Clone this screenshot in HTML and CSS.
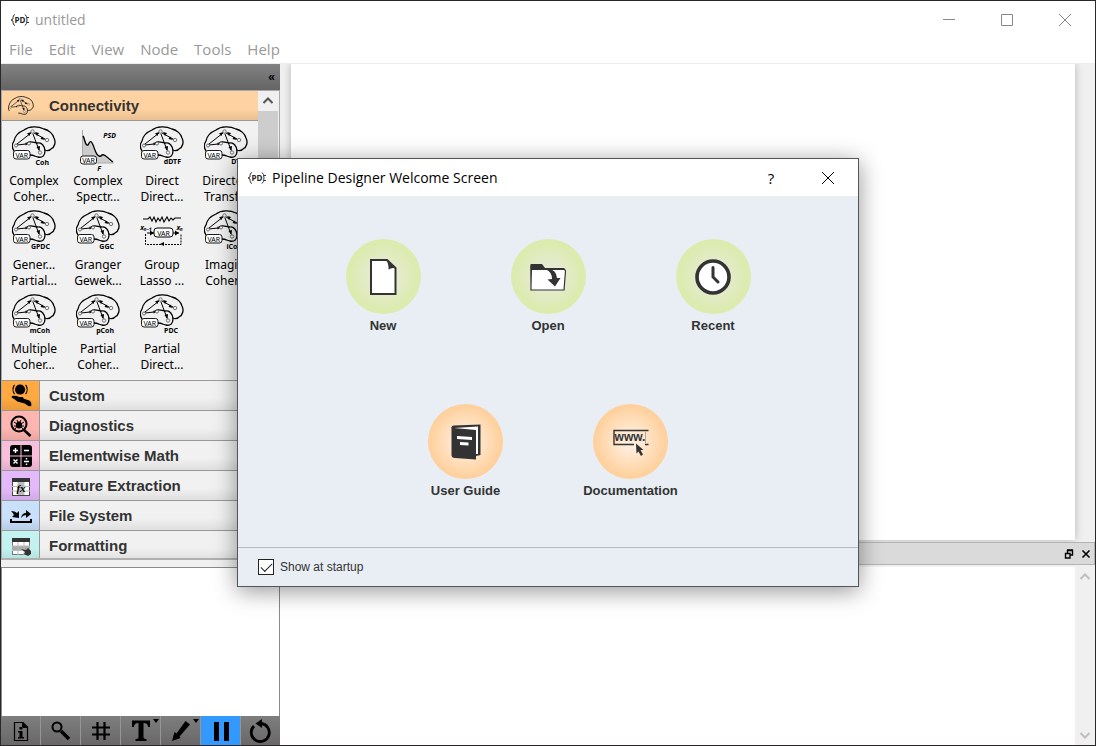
FILE: index.html
```html
<!DOCTYPE html>
<html lang="en">
<head>
<meta charset="utf-8">
<title>untitled</title>
<link rel="stylesheet" href="styles.css">
</head>
<body>
<svg class="defs" aria-hidden="true">
  <defs>
    <symbol id="logo" viewBox="0 0 20 14">
      <g fill="none" stroke="#333" stroke-width="1">
        <path d="M5 1.500Q3 2 3 4.500V6L1 7L3 8V9.500Q3 12 5 12.500M15 1.500Q17 3 17 7T15 12.500"/>
        <path d="M17 4.500H19M17 9.500H19" />
      </g>
      <text x="10" y="10" text-anchor="middle" class="logo-text">PD</text>
    </symbol>
    <symbol id="brain-lines" viewBox="0 0 44 34">
      <g fill="none" stroke="#000" stroke-width="1.300" stroke-linecap="round" stroke-linejoin="round">
        <path d="M2 25C0 22 0 18 2 15C3 10 7 6 12 4C17 0 26 0 32 3C37 4 41 8 42 12C44 16 43 21 39 23C37 25 35 25 33 24"/>
        <path d="M15 17C19 14 22 17 26 17C29 16 33 20 33 25C33 30 30 32 26 31C24 31 22 29 18 29"/>
        <path d="M5 18L19 7M5 19L14 18M22 7L33 13M21 8L27 24" stroke-width="1"/>
      </g>
      <path d="M19 6L15 7.500L17.500 10ZM13.500 16.500V19.500L16 18ZM23 6L27 7L25 10ZM30 10.500L28.500 13L33 14ZM24.500 21L28 20L27.500 25Z"/>
      <g fill="#f0f0f0" stroke="#555" stroke-width=".8">
        <circle cx="4" cy="19.500" r="1.500"/><circle cx="17" cy="17.500" r="1.500"/><circle cx="20.500" cy="5.500" r="1.700"/><circle cx="35" cy="14" r="1.700"/><circle cx="28" cy="26.500" r="1.700"/>
      </g>
    </symbol>
    <symbol id="brain" viewBox="0 0 44 34">
      <use href="#brain-lines" width="44" height="34"/>
      <rect x="1.500" y="24.500" width="16.500" height="8.500" rx="2.500" fill="#fff" stroke="#000" stroke-width=".9"/>
      <text x="9.750" y="31.500" text-anchor="middle" class="var-text">VAR</text>
    </symbol>
  </defs>
</svg>

<div class="window">
  <header class="titlebar">
    <svg class="logo" viewBox="0 0 20 14"><use href="#logo"/></svg>
    <span class="window-title">untitled</span>
    <div class="window-controls">
      <button aria-label="Minimize"><svg viewBox="0 0 14 14"><path d="M1 6.500H13"/></svg></button>
      <button aria-label="Maximize"><svg viewBox="0 0 14 14"><path d="M1.500 1.500H12.500V12.500H1.500Z"/></svg></button>
      <button aria-label="Close window"><svg viewBox="0 0 14 14"><path d="M1 1L13 13M13 1L1 13"/></svg></button>
    </div>
  </header>
  <nav class="menubar">
    <button>File</button><button>Edit</button><button>View</button><button>Node</button><button>Tools</button><button>Help</button>
  </nav>

  <div class="workspace">
    <aside class="sidebar">
      <div class="dock-bar"><button aria-label="Collapse">«</button></div>
      <div class="toolbox">
        <div class="groups">
          <button class="group open">
            <span class="group-icon"><svg class="wide" viewBox="0 0 44 34"><use href="#brain-lines"/></svg></span>Connectivity
          </button>
          <div class="nodes">
            <div class="node"><svg viewBox="0 0 44 42"><use href="#brain" width="44" height="34"/><text x="37" y="39" class="tag">Coh</text></svg><span>Complex<br>Coher...</span></div>
            <div class="node"><svg viewBox="0 0 44 42">
              <path d="M7 37V10L9 14L11 20L14 16L18 24L23 30L27 28L31 33L37 37Z" fill="#ccc"/>
              <path d="M6.500 4V37H38" fill="none" stroke="#aaa"/>
              <path d="M7 10C9 13 9 20 12 19C14 15 15 14 17 19C19 24 21 32 25 30C28 26 32 33 37 36" fill="none" stroke="#000" stroke-width="1.400"/>
              <rect x="4.500" y="30" width="16" height="8" rx="2.500" fill="#fff" stroke="#000" stroke-width=".9"/>
              <text x="12.500" y="37" text-anchor="middle" class="var-text">VAR</text>
              <text x="40" y="12" class="tag slant">PSD</text><text x="25" y="45" class="tag slant">F</text>
            </svg><span>Complex<br>Spectr...</span></div>
            <div class="node"><svg viewBox="0 0 44 42"><use href="#brain" width="44" height="34"/><text x="41" y="38" class="tag">dDTF</text></svg><span>Direct<br>Direct...</span></div>
            <div class="node"><svg viewBox="0 0 44 42"><use href="#brain" width="44" height="34"/><text x="40" y="38" class="tag">DTF</text></svg><span>Directed<br>Transf...</span></div>
            <div class="node"><svg viewBox="0 0 44 42"><use href="#brain" width="44" height="34"/><text x="38" y="39" class="tag">GPDC</text></svg><span>Gener...<br>Partial...</span></div>
            <div class="node"><svg viewBox="0 0 44 42"><use href="#brain" width="44" height="34"/><text x="38" y="39" class="tag">GGC</text></svg><span>Granger<br>Gewek...</span></div>
            <div class="node"><svg viewBox="0 0 44 42">
              <path d="M3 9H8L10 7L12 11L14 7L16 12L18 8L20 11L22 7L24 12L27 7L29 11L31 8L33 10L35 8H41" fill="none" stroke="#000" stroke-width="1.100"/>
              <rect x="14" y="18" width="19" height="9" rx="3" fill="#fff" stroke="#000"/>
              <text x="23.500" y="25.500" text-anchor="middle" class="var-text">VAR</text>
              <path d="M7 23H14M33 23H39" stroke="#000"/><path d="M10 20.500L14 23L10 25.500ZM35 20.500L39 23L35 25.500ZM24 32V36L20 34Z"/>
              <path d="M5.500 24V34.500H41V24" fill="none" stroke="#000" stroke-dasharray="2 1"/>
              <text x="12" y="20" class="tag slant">xₙ₋₁</text><text x="43" y="20" class="tag slant">xₙ</text>
            </svg><span>Group<br>Lasso ...</span></div>
            <div class="node"><svg viewBox="0 0 44 42"><use href="#brain" width="44" height="34"/><text x="38" y="39" class="tag">iCoh</text></svg><span>Imagi...<br>Coher...</span></div>
            <div class="node"><svg viewBox="0 0 44 42"><use href="#brain" width="44" height="34"/><text x="38" y="39" class="tag">mCoh</text></svg><span>Multiple<br>Coher...</span></div>
            <div class="node"><svg viewBox="0 0 44 42"><use href="#brain" width="44" height="34"/><text x="38" y="39" class="tag">pCoh</text></svg><span>Partial<br>Coher...</span></div>
            <div class="node"><svg viewBox="0 0 44 42"><use href="#brain" width="44" height="34"/><text x="38" y="39" class="tag">PDC</text></svg><span>Partial<br>Direct...</span></div>
          </div>
          <button class="group"><span class="group-icon orange"><svg viewBox="0 0 24 26"><circle cx="11" cy="6" r="5.500"/><path d="M5 1Q1.500 6 5 11M17 1Q20.500 6 17 11" fill="none" stroke="#000" stroke-width="1.200"/><path d="M2 13Q6 12 10 14H14L15 16L21 18Q24 20 23 24Q19 24 16 21L8 19Q5 16 2 15Z"/></svg></span>Custom</button>
          <button class="group"><span class="group-icon red"><svg viewBox="0 0 24 24"><circle cx="10" cy="10" r="7.500" fill="none" stroke="#000" stroke-width="2"/><path d="M15 16L21.500 22" stroke="#000" stroke-width="2.500"/><ellipse cx="10" cy="11" rx="3" ry="3.500"/><path d="M5 8L8 10M15 8L12 10M5 12H15M6 15L8 12.500M14 15L12 12.500M8 6L9 8M12 6L11 8" stroke="#000"/></svg></span>Diagnostics</button>
          <button class="group"><span class="group-icon pink"><svg viewBox="0 0 24 24"><rect x="1" y="1" width="22" height="22" rx="3"/><path d="M12 0V24M0 12H24" stroke="#f9bedb" stroke-width="1"/><path d="M6.500 4V9M4 6.500H9M15 6.500H20M4.500 15.500L8.500 19.500M8.500 15.500L4.500 19.500M15 17.500H20M17.500 14V15.500M17.500 19.500V21" stroke="#fff" stroke-width="1.400"/></svg></span>Elementwise Math</button>
          <button class="group"><span class="group-icon purple"><svg viewBox="0 0 24 24"><rect x="3.500" y="4.500" width="17" height="17" fill="#fff" stroke="#444"/><path d="M9 8H15V21H9Z" fill="#bbb"/><path d="M3 12.500H21M3 17H21M9 8V21M15 8V21" stroke="#bbb"/><path d="M3 4H21V8H3Z" fill="#333"/><text x="12" y="18" text-anchor="middle" class="fx">fx</text></svg></span>Feature Extraction</button>
          <button class="group"><span class="group-icon blue"><svg viewBox="0 0 24 24"><path d="M2 15V18H22V15" fill="none" stroke="#000" stroke-width="2"/><path d="M2 7Q6 7 8 9L10 7V14L3 13L5 11Q4 9 2 7ZM12 14Q13 9 17 9V6L22 10L17 14V11Q14 11 12 14Z"/></svg></span>File System</button>
          <button class="group"><span class="group-icon teal"><svg viewBox="0 0 24 24"><rect x="3.500" y="4.500" width="17" height="16" fill="#fff" stroke="#777"/><path d="M3 12H21V16H3Z" fill="#aaa"/><path d="M9 8V21M15 8V21M3 12H21M3 16.500H21" stroke="#bbb"/><path d="M3 4H21V8H3ZM12 15L17 16L19 14L22 17V20L19 22L15 20L16 18Z" fill="#333"/></svg></span>Formatting</button>
        </div>
        <div class="tool-scroll">
          <button aria-label="Scroll up"><svg viewBox="0 0 12 12"><path d="M1.500 8L6 3.500L10.500 8"/></svg></button>
          <div class="thumb"></div>
        </div>
      </div>
      <div class="overview"></div>
      <div class="tools">
        <button aria-label="Information"><svg viewBox="0 0 24 24"><path d="M5.500 3.500H14L18.500 8V21.500H5.500Z" fill="none" stroke="#000" stroke-width="1.200"/><path d="M13 3V9H19ZM10.500 8H13.500V10.500H10.500ZM9 12H13.500V18H15V19.500H9V18H10.500V13.500H9Z"/></svg></button>
        <button aria-label="Zoom"><svg viewBox="0 0 24 24"><circle cx="8" cy="8" r="4.500" fill="none" stroke="#000" stroke-width="2"/><path d="M12 12L20 20" stroke="#000" stroke-width="3.500"/></svg></button>
        <button aria-label="Grid"><svg viewBox="0 0 24 24"><path d="M8.500 3V21M15.500 3V21M3 8.500H21M3 15.500H21" stroke="#000" stroke-width="2.200"/></svg></button>
        <button aria-label="Text"><svg viewBox="0 0 24 24"><path d="M3 1.500H21V8H19Q19 4 14.500 4V18Q14.500 20 17.500 20V22H6.500V20Q9.500 20 9.500 18V4Q5 4 5 8H3Z"/></svg><i class="caret"></i></button>
        <button aria-label="Draw"><svg viewBox="0 0 24 24"><path d="M16.500 2L21 5.500L10.500 17.500L11.500 19L3 22L5.500 13L7.500 14.500Z"/></svg><i class="caret"></i></button>
        <button class="active" aria-label="Pause"><svg viewBox="0 0 24 24"><path d="M5 3H10V22H5ZM15 3H20V22H15Z"/></svg></button>
        <button aria-label="Reset"><svg viewBox="0 0 24 24"><path d="M5 7A9 9 0 1 0 12 4.500" fill="none" stroke="#000" stroke-width="2.800"/><path d="M6.500 4.500L13 0V9Z"/></svg></button>
      </div>
    </aside>

    <main class="main">
      <div class="canvas"><div class="sheet"></div></div>
      <section class="console">
        <div class="console-bar">
          <button aria-label="Float"><svg viewBox="0 0 10 10"><path d="M3.500 4V1.500H8.500V6H6M3 1H9M1.500 4.500H6V9H1.500ZM1 4.500H6" fill="none" stroke="#000" stroke-width="1.400"/></svg></button>
          <button aria-label="Close panel"><svg viewBox="0 0 10 10"><path d="M1.500 1.500L8.500 8.500M8.500 1.500L1.500 8.500" stroke="#000" stroke-width="1.600"/></svg></button>
        </div>
        <div class="console-body">
          <div class="console-scroll">
            <button aria-label="Scroll console up"><svg viewBox="0 0 12 12"><path d="M1.500 8L6 3.500L10.500 8"/></svg></button>
            <button aria-label="Scroll console down"><svg viewBox="0 0 12 12"><path d="M1.500 4L6 8.500L10.500 4"/></svg></button>
          </div>
        </div>
      </section>
    </main>
  </div>

  <div class="dialog" role="dialog" aria-labelledby="dialog-title">
    <div class="dialog-bar">
      <svg class="logo" viewBox="0 0 20 14"><use href="#logo"/></svg>
      <h1 id="dialog-title">Pipeline Designer Welcome Screen</h1>
      <button class="help" aria-label="Help">?</button>
      <button class="close" aria-label="Close"><svg viewBox="0 0 14 14"><path d="M1 1L13 13M13 1L1 13"/></svg></button>
    </div>
    <div class="choices">
      <div class="row">
        <button class="choice"><span class="disc green"><svg viewBox="0 0 40 40"><path d="M8 3H24L32.500 11V37H8Z" fill="#fff" stroke="#333" stroke-width="2"/><path d="M23 3L33 11.500Q29 10 25.500 12.500Q26 7 23 3Z" fill="#333"/></svg></span>New</button>
        <button class="choice"><span class="disc green"><svg viewBox="0 0 40 40"><path d="M3 33V9H13L15.500 12H36L37.500 14L36 33Z" fill="#fff" stroke="#333" stroke-width="1.200"/><path d="M2.500 7.500Q2.500 7 3 7H14L17 11H35Q37 11 37.500 13H4L3 28Z" fill="#333"/><path d="M18 12.500Q28 11 29 21H32.500L27 29.500L19.500 22.500L24 22Q24 15 18 12.500Z" fill="#333"/></svg></span>Open</button>
        <button class="choice"><span class="disc green"><svg viewBox="0 0 40 40"><circle cx="20" cy="20" r="16" fill="#fff" stroke="#333" stroke-width="3.600"/><path d="M20 10.500V20L25 25" fill="none" stroke="#333" stroke-width="3" stroke-linecap="round"/></svg></span>Recent</button>
      </div>
      <div class="row">
        <button class="choice"><span class="disc peach"><svg viewBox="0 0 40 40"><path d="M5.500 6Q5 4 8 3.500L34.500 2.500V33L30 34" fill="#333"/><path d="M8 6L32 4.500V32H30V8Z" fill="#fff"/><path d="M5.500 5Q7 8 10 8L30 9V37.500L9 36Q5.500 36 5.500 33Z" fill="#333"/><path d="M11 14L26 15V18L11 17ZM14 20L22.500 20.500V23.500L14 23Z" fill="#fff"/></svg></span>User Guide</button>
        <button class="choice"><span class="disc peach"><svg viewBox="0 0 40 40"><path d="M37.500 8.500H3V22.500H23M34 22.500H37.500" fill="none" stroke="#333" stroke-width="1.400"/><path d="M34.500 10V21" stroke="#aaa"/><text x="19" y="19" text-anchor="middle" class="www">www.</text><path d="M25 21.500L32.500 28H29.500L32 32.500L30 34L27.500 29.500L25.500 31.500Z" fill="#333"/></svg></span>Documentation</button>
      </div>
    </div>
    <div class="dialog-foot">
      <input type="checkbox" id="startup" checked><label for="startup">Show at startup</label>
    </div>
  </div>
</div>
</body>
</html>
```

FILE: styles.css
```css
* { box-sizing: border-box; }

body {
  margin: 0;
  font-family: "Liberation Sans", Arial, sans-serif;
  color: #333;
}

button {
  margin: 0;
  padding: 0;
  border: 0;
  background: none;
  color: inherit;
  font: inherit;
}

svg { display: block; }
.defs { position: absolute; width: 0; height: 0; }

.logo { width: 20px; height: 14px; flex: none; }
.logo-text { font: bold 8px "Open Sans", sans-serif; fill: #222; }
.var-text { font: 7px "Noto Sans", sans-serif; fill: #000; }
.tag { font: bold 7px "Noto Sans", sans-serif; fill: #000; text-anchor: end; }
.slant { font-style: italic; }
.fx { font: italic bold 11px "Liberation Serif", serif; }
.www { font: bold 12px "Liberation Sans", sans-serif; fill: #333; }

.window {
  position: relative;
  display: flex;
  flex-direction: column;
  height: 100vh;
  border: 1px solid #2b2829;
  background: #fff;
  overflow: hidden;
}

.titlebar {
  display: flex;
  align-items: center;
  flex: none;
  height: 37px;
  padding-left: 9px;
  gap: 5px;
  color: #999;
  font: 14px "Open Sans", sans-serif;
}
.window-controls { display: flex; margin-left: auto; padding-right: 1px; }
.window-controls button {
  display: grid;
  place-items: center;
  width: 58px;
  height: 36px;
}
.window-controls svg { width: 14px; height: 14px; fill: none; stroke: #888; }

.menubar {
  display: flex;
  flex: none;
  gap: 16px;
  height: 26px;
  padding: 0 0 3px 8px;
  border-bottom: 1px solid #ededed;
  color: #999;
  font: 15px/22px "Open Sans", sans-serif;
}

.workspace { display: flex; flex: 1; min-height: 0; background: #f0f0f0; }

.sidebar { display: flex; flex-direction: column; flex: none; width: 279px; }
.dock-bar {
  flex: none;
  height: 26px;
  padding-right: 5px;
  background: linear-gradient(#828282, #646464);
  color: #000;
  font: bold 12px/26px "Liberation Sans", sans-serif;
  text-align: right;
}
.toolbox {
  display: flex;
  flex: 1;
  min-height: 0;
  border: 1px solid #a9a9ad;
  border-bottom: 2px solid #b0b0b0;
  overflow: hidden;
}
.groups { flex: 1; min-width: 0; }
.group {
  display: flex;
  align-items: center;
  width: 100%;
  height: 30px;
  border-bottom: 1px solid #999;
  background: linear-gradient(#f1f1f1 60%, #dfdfdf);
  font-weight: bold;
  font-size: 15px;
  text-align: left;
}
.group.open { background: linear-gradient(#ffd3a1 60%, #e9c092); }
.group-icon {
  display: grid;
  place-items: center;
  width: 38px;
  height: 100%;
  margin-right: 9px;
  border-right: 1px solid #999;
}
.group-icon svg { width: 24px; height: 24px; }
.group-icon svg.wide { width: 26px; height: 20px; }
.open .group-icon { border-color: transparent; }
.orange { background: linear-gradient(#ffa940 60%, #e89a3a); }
.red { background: linear-gradient(#ffb5b0 60%, #eaa5a0); }
.pink { background: linear-gradient(#f9bedb 60%, #e3aec8); }
.purple { background: linear-gradient(#e3b9fb 60%, #d0a9e6); }
.blue { background: linear-gradient(#c9e0fb 60%, #b7cce5); }
.teal { background: linear-gradient(#c2f3f1 60%, #b1dfdc); }

.nodes {
  display: grid;
  grid-template-columns: repeat(4, 64px);
  padding: 5px 0 2px;
  border-bottom: 1px solid #999;
  background: #f1f1f1;
}
.node {
  display: flex;
  flex-direction: column;
  align-items: center;
  height: 84px;
  color: #000;
  font: 12px/16px "Noto Sans", sans-serif;
  text-align: center;
}
.node svg { width: 44px; height: 42px; margin-bottom: 5px; flex: none; overflow: visible; }

.tool-scroll { flex: none; width: 21px; padding-right: 1px; background: #f0f0f0; }
.tool-scroll button, .console-scroll button {
  display: grid;
  place-items: center;
  width: 20px;
  height: 20px;
}
.tool-scroll svg, .console-scroll svg { width: 12px; height: 12px; fill: none; stroke: #555; stroke-width: 2; }
.tool-scroll .thumb { height: 220px; background: #cdcdcd; }

.overview {
  flex: none;
  height: 149px;
  margin-top: 7px;
  border: 1px solid #8a8a8a;
  border-bottom: 0;
  background: #fff;
}
.tools { display: flex; flex: none; height: 29px; background: linear-gradient(#7e7e7e, #686868); }
.tools button {
  position: relative;
  display: grid;
  place-items: center;
  flex: 1;
  border-right: 1px solid #969696;
}
.tools button:last-child { border-right: 0; }
.tools svg { width: 24px; height: 24px; }
.tools .active { background: #3399ff; }
.caret {
  position: absolute;
  top: 3px;
  right: 1px;
  border: 3px solid transparent;
  border-top: 4px solid #000;
  border-bottom: 0;
}

.main { display: flex; flex-direction: column; flex: 1; min-width: 0; }
.canvas { display: flex; flex: 1; padding: 0 20px 2px 11px; }
.sheet { flex: 1; background: #fff; box-shadow: 0 0 8px rgba(0, 0, 0, .25); clip-path: inset(0 -12px -2px -12px); }
.console { display: flex; flex-direction: column; flex: none; height: 203px; }
.console-bar {
  display: flex;
  align-items: center;
  justify-content: flex-end;
  flex: none;
  gap: 7px;
  height: 23px;
  padding-right: 3px;
  border: 1px solid #b4b4b4;
  background: #dadada;
}
.console-bar svg { width: 10px; height: 10px; }
.console-body { display: flex; justify-content: flex-end; flex: 1; margin-top: 2px; background: #fff; }
.console-scroll {
  display: flex;
  flex-direction: column;
  justify-content: space-between;
  width: 20px;
  background: #f0f0f0;
}
.console-scroll svg { stroke: #bfbfbf; }

.dialog {
  position: absolute;
  left: 236px;
  top: 157px;
  width: 622px;
  border: 1px solid #555;
  background: #e8eef3;
  box-shadow: 0 4px 22px rgba(0, 0, 0, .42);
}
.dialog-bar {
  display: flex;
  align-items: center;
  height: 37px;
  padding: 0 10px 0 9px;
  background: #fff;
  color: #000;
  font: 14px "Open Sans", sans-serif;
}
.dialog-bar h1 { margin: 0 auto 0 5px; font: inherit; }
.help { width: 40px; font-size: 15px; }
.close { display: grid; place-items: center; width: 40px; height: 36px; margin-left: 17px; }
.close svg { width: 14px; height: 14px; fill: none; stroke: #000; stroke-width: 1; }

.choices { display: grid; gap: 69px; padding: 43px 0 47px; }
.row { display: flex; justify-content: center; gap: 60px; }
.choice {
  display: flex;
  flex-direction: column;
  align-items: center;
  gap: 3px;
  width: 105px;
  font: bold 13px/18px "Liberation Sans", sans-serif;
}
.disc { display: grid; place-items: center; width: 75px; height: 75px; border-radius: 50%; }
.disc svg { width: 40px; height: 40px; }
.green { background: radial-gradient(closest-side, #e7ebd8 20%, #dcebae 92%); }
.peach { background: radial-gradient(closest-side, #ffecda 20%, #ffd09c 96%); }

.dialog-foot {
  display: flex;
  align-items: center;
  gap: 6px;
  height: 39px;
  padding-left: 20px;
  border-top: 1px solid #b5bbc0;
  font-size: 12px;
}
.dialog-foot input {
  appearance: none;
  display: grid;
  place-items: center;
  width: 16px;
  height: 16px;
  margin: 0;
  border: 1px solid #222;
  background: #fff;
}
.dialog-foot input:checked::after {
  content: "";
  width: 10px;
  height: 5px;
  margin-bottom: 3px;
  border: solid #222;
  border-width: 0 0 1px 1px;
  transform: rotate(-45deg);
}
```
